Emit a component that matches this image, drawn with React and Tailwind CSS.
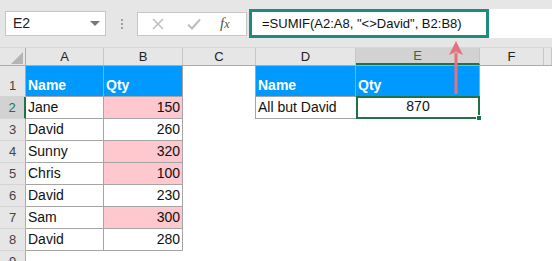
import React from 'react';

const cols = [
  { key: 'A', w: 'w-[78px]' },
  { key: 'B', w: 'w-[79px]' },
  { key: 'C', w: 'w-[73px]' },
  { key: 'D', w: 'w-[100px]' },
  { key: 'E', w: 'w-[124px]' },
  { key: 'F', w: 'w-[64px]' },
  { key: '', w: 'flex-1' },
];

const data = [
  ['Jane', 150, true],
  ['David', 260, false],
  ['Sunny', 320, true],
  ['Chris', 100, true],
  ['David', 230, false],
  ['Sam', 300, true],
  ['David', 280, false],
];

const RowHead = ({ n, active }) => (
  <div
    className={`w-[26px] shrink-0 flex items-end justify-center pb-[1px] text-[13px] border-b border-b-[#d4d4d4] ${
      active
        ? 'bg-[#d2d2d2] text-[#217346] border-r-2 border-r-[#217346]'
        : 'bg-[#e6e6e6] text-[#444] border-r border-r-[#ababab]'
    }`}
  >
    {n}
  </div>
);

const Cell = ({ w, className = '', children }) => (
  <div className={`${w} shrink-0 flex items-end px-[2px] ${className}`}>{children}</div>
);

export default function App() {
  return (
    <div
      className="relative w-[552px] h-[261px] overflow-hidden bg-white text-[#111]"
      style={{ fontFamily: '"Liberation Sans", Arial, sans-serif' }}
    >
      {/* formula bar */}
      <div className="h-[47px] bg-[#e6e6e6] flex items-center">
        <div className="ml-[5px] w-[101px] h-[25px] bg-white border border-[#c6c6c6] flex items-center justify-between pl-[7px] pr-[5px] text-[14px] text-[#222]">
          <span>E2</span>
          <svg width="10" height="6" viewBox="0 0 10 6">
            <path d="M0 0 L10 0 L5 5 Z" fill="#777" />
          </svg>
        </div>
        <div className="w-[31px] flex flex-col items-center gap-[2px]">
          <span className="w-[2px] h-[2px] bg-[#a0a0a0]" />
          <span className="w-[2px] h-[2px] bg-[#a0a0a0]" />
          <span className="w-[2px] h-[2px] bg-[#a0a0a0]" />
        </div>
        <div className="w-[110px] h-[24px] bg-white border border-[#c6c6c6] flex items-center">
          <svg className="ml-[14px]" width="12" height="12" viewBox="0 0 12 12">
            <path d="M1 1 L11 11 M11 1 L1 11" stroke="#bdbdbd" strokeWidth="1.5" />
          </svg>
          <svg className="ml-[23px]" width="14" height="12" viewBox="0 0 14 12">
            <path d="M1 6.5 L5 10.5 L13 1.5" stroke="#bdbdbd" strokeWidth="2" fill="none" />
          </svg>
          <span
            className="ml-[19px] text-[15px] italic text-[#555]"
            style={{ fontFamily: '"Liberation Serif", serif' }}
          >
            f<span className="text-[12px]">x</span>
          </span>
        </div>
        <div className="ml-[2px] flex-1 h-[29px] bg-white flex">
          <div className="w-[240px] h-full border-[3px] border-[#1e8b7c] flex items-center pl-[10px] text-[13px] text-[#111] whitespace-nowrap">
            =SUMIF(A2:A8, "&lt;&gt;David", B2:B8)
          </div>
        </div>
      </div>

      {/* column headers */}
      <div className="flex h-[19px] bg-[#e6e6e6] border-t border-[#d6d6d6] border-b border-b-[#ababab]">
        <div className="w-[26px] shrink-0 border-r border-[#ababab] flex items-end justify-end pr-[2px] pb-[1px]">
          <svg width="12" height="12" viewBox="0 0 12 12">
            <path d="M12 0 L12 12 L0 12 Z" fill="#b4b4b4" />
          </svg>
        </div>
        {cols.map((c, i) => (
          <div
            key={i}
            className={`${c.w} shrink-0 flex items-center justify-center text-[13px] border-r border-[#c6c6c6] ${
              c.key === 'E' ? 'bg-[#d2d2d2] text-[#217346] border-b-2 border-b-[#217346]' : 'text-[#222]'
            }`}
          >
            {c.key}
          </div>
        ))}
      </div>

      {/* row 1 */}
      <div className="flex h-[31px] text-[14px]">
        <RowHead n={1} />
        <Cell w="w-[78px]" className="bg-[#0099ff] text-white font-bold border-r border-b border-[#a5a5a5]">Name</Cell>
        <Cell w="w-[79px]" className="bg-[#0099ff] text-white font-bold border-r border-b border-[#a5a5a5]">Qty</Cell>
        <Cell w="w-[73px]" className="border-r border-[#a5a5a5]" />
        <Cell w="w-[100px]" className="bg-[#0099ff] text-white font-bold border-r border-b border-[#a5a5a5]">Name</Cell>
        <Cell w="w-[124px]" className="bg-[#0099ff] text-white font-bold border-r border-b border-[#a5a5a5]">Qty</Cell>
        <Cell w="flex-1" />
      </div>

      {/* rows 2-8 */}
      {data.map(([name, qty, hl], i) => (
        <div key={i} className="flex h-[22px] text-[14px]">
          <RowHead n={i + 2} active={i === 0} />
          <Cell w="w-[78px]" className="border-r border-b border-[#a5a5a5]">{name}</Cell>
          <Cell
            w="w-[79px]"
            className={`justify-end border-r border-b border-[#a5a5a5] ${hl ? 'bg-[#ffc7ce]' : ''}`}
          >
            {qty}
          </Cell>
          {i === 0 ? (
            <>
              <Cell w="w-[73px]" className="border-r border-[#a5a5a5]" />
              <Cell w="w-[100px]" className="border-b border-[#a5a5a5]">All but David</Cell>
              <div className="relative w-[124px] shrink-0 flex items-end justify-center border-2 border-[#217346] -mt-[1px]">
                870
                <span className="absolute -right-[4px] -bottom-[4px] w-[6px] h-[6px] bg-[#217346] border border-white" />
              </div>
            </>
          ) : null}
        </div>
      ))}

      {/* row 9 */}
      <div className="flex h-[22px] text-[14px]">
        <RowHead n={9} />
      </div>

      {/* arrow */}
      <svg className="absolute left-[446px] top-[39px]" width="20" height="58" viewBox="0 0 20 58">
        <path d="M10 14 L10 55" stroke="#e7717e" strokeWidth="3" />
        <path d="M10 2 L17 16 L10 13 L3 16 Z" fill="#e7717e" />
      </svg>
    </div>
  );
}
